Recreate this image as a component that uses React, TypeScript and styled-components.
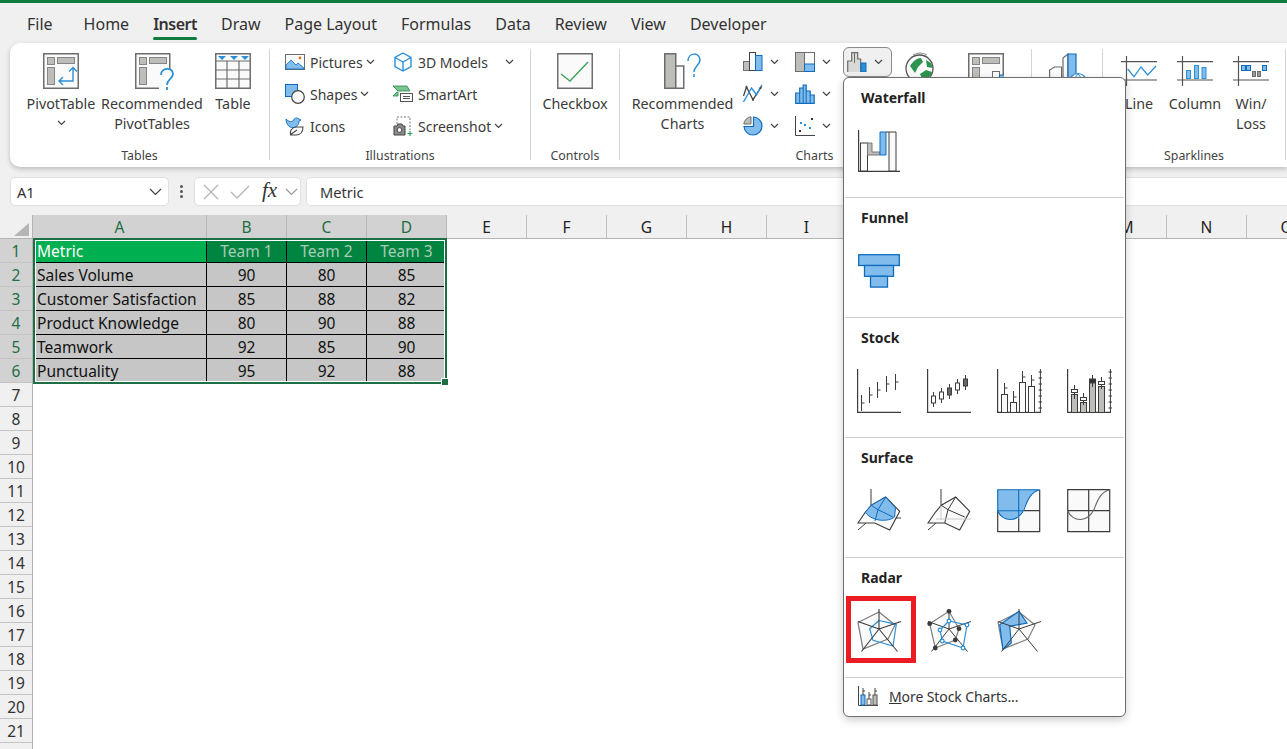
import React from 'react';
import styled, { createGlobalStyle } from 'styled-components';

const UI_FONT = '"Noto Sans", "Open Sans", sans-serif';
const CELL_FONT = '"Noto Sans", "Open Sans", sans-serif';
const GREEN = '#1e6e45';
const LINE = '#6d6d6d';
const DARK = '#3c3c3c';
const FILL = '#bdbdb9';
const PALE = '#fafafa';
const BLUE_FILL = '#82bcec';
const BLUE = '#0f6cbd';
const SKY = '#2b8fd8';

const GlobalStyle = createGlobalStyle`
  html, body {
    margin: 0;
    padding: 0;
    height: 100%;
    overflow: hidden;
    background: #fff;
  }
  body {
    font-family: ${UI_FONT};
  }
`;

const Page = styled.div`
  position: relative;
  width: 1287px;
  height: 749px;
  overflow: hidden;
  background: #fff;
  display: flex;
  flex-direction: column;
`;

const Chrome = styled.div`
  background: #f0f0f0;
  display: flex;
  flex-direction: column;
`;

const TopStripe = styled.div`
  height: 3px;
  background: #107c41;
`;

const TabBar = styled.div`
  height: 40px;
  display: flex;
  align-items: center;
  padding-left: 27px;
  gap: 24px;
  font-size: 16px;
  color: #333;
`;

const Tab = styled.div<{ $active?: boolean; $wide?: boolean }>`
  position: relative;
  height: 40px;
  line-height: 42px;
  margin-right: ${({ $wide }) => ($wide ? '7px' : '0')};
  font-weight: ${({ $active }) => ($active ? 600 : 400)};
  letter-spacing: ${({ $active }) => ($active ? '-0.5px' : '0')};
  ${({ $active }) =>
    $active &&
    `
    &::after {
      content: '';
      position: absolute;
      left: 0;
      right: 0;
      bottom: 3px;
      height: 3px;
      border-radius: 2px;
      background: #107c41;
    }
  `}
`;

const Ribbon = styled.div`
  margin-left: 10px;
  height: 124px;
  box-sizing: border-box;
  padding-top: 3px;
  background: #fff;
  border-radius: 10px 0 0 10px;
  box-shadow: 0 2px 5px rgba(0, 0, 0, 0.22);
  display: flex;
  align-items: flex-start;
  font-size: 14px;
  color: #3b3b3b;
  position: relative;
`;

const Group = styled.div<{ $width: number }>`
  width: ${({ $width }) => $width}px;
  flex: none;
  height: 120px;
  display: grid;
  grid-template-rows: 100px 20px;
`;

const GroupBody = styled.div<{ $pad?: number }>`
  display: flex;
  align-items: flex-start;
  padding-left: ${({ $pad }) => $pad ?? 0}px;
`;

const GroupLabel = styled.div<{ $shift?: number }>`
  text-align: center;
  font-size: 12.4px;
  line-height: 20px;
  color: #444;
  padding-right: ${({ $shift }) => $shift ?? 0}px;
`;

const GroupSep = styled.div`
  width: 1px;
  flex: none;
  height: 111px;
  margin-top: 3px;
  background: #d4d4d4;
`;

const LargeButton = styled.div<{ $width: number; $gap?: number }>`
  width: ${({ $width }) => $width}px;
  flex: none;
  margin-left: ${({ $gap }) => $gap ?? 0}px;
  padding-top: 7px;
  display: flex;
  flex-direction: column;
  align-items: center;
  text-align: center;
`;

const LargeIcon = styled.div<{ $nudge?: number }>`
  height: 36px;
  margin-bottom: 5px;
  margin-left: ${({ $nudge }) => $nudge ?? 0}px;
  display: flex;
  align-items: flex-start;
  svg {
    overflow: visible;
  }
`;

const LargeLabel = styled.div`
  font-size: 14.3px;
  line-height: 20px;
  white-space: nowrap;
`;

const LargeChevron = styled.div`
  line-height: 0;
  margin-top: 6px;
`;

const SmallColumn = styled.div<{ $width: number; $gap?: number }>`
  width: ${({ $width }) => $width}px;
  margin-left: ${({ $gap }) => $gap ?? 0}px;
  flex: none;
  display: flex;
  flex-direction: column;
`;

const SmallButton = styled.div`
  height: 32px;
  display: flex;
  align-items: center;
  gap: 5px;
  white-space: nowrap;
`;

const DropChevron = styled.span<{ $gap?: number }>`
  display: inline-flex;
  margin-left: ${({ $gap }) => $gap ?? 0}px;
`;

const ActiveDrop = styled.div`
  width: 49px;
  height: 30px;
  flex: none;
  margin-top: 1px;
  box-sizing: border-box;
  border: 1px solid #8a8a8a;
  border-radius: 6px;
  background: #f0f0f0;
  display: flex;
  align-items: center;
  padding-left: 3px;
  gap: 6px;
`;

const PlainIconSlot = styled.div<{ $gap: number; $top?: number }>`
  flex: none;
  margin-left: ${({ $gap }) => $gap}px;
  padding-top: ${({ $top }) => $top ?? 6}px;
`;

const FormulaBar = styled.div`
  height: 29px;
  margin-top: 10px;
  margin-bottom: 9px;
  display: flex;
  align-items: stretch;
  padding-left: 10px;
  font-size: 14.6px;
  color: #333;
`;

const Field = styled.div`
  box-sizing: border-box;
  background: #fff;
  border: 1px solid #e0e0e0;
  border-radius: 5px;
  display: flex;
  align-items: center;
`;

const NameBox = styled(Field)`
  width: 159px;
  padding: 0 6px;
  justify-content: space-between;
`;

const Kebab = styled.div`
  width: 25px;
  display: flex;
  flex-direction: column;
  align-items: center;
  justify-content: center;
  gap: 2px;
  span {
    width: 3px;
    height: 3px;
    background: #555;
    border-radius: 50%;
  }
`;

const FnBox = styled(Field)`
  width: 107px;
  padding-left: 8px;
  gap: 11px;
`;

const FxMark = styled.span`
  font-family: 'Liberation Serif', serif;
  font-style: italic;
  font-size: 21px;
  line-height: 1;
  color: #333;
  margin: -2px 0 0 1px;
`;

const FxChevron = styled.span`
  display: inline-flex;
  margin-left: -3px;
`;

const FormulaInput = styled(Field)`
  flex: 1;
  margin-left: 5px;
  padding-left: 13px;
  border-right: none;
  border-radius: 5px 0 0 5px;
`;

const HeaderRow = styled.div`
  display: flex;
  height: 24px;
  background: #f0f0f0;
`;

const Corner = styled.div`
  width: 33px;
  flex: none;
  box-sizing: border-box;
  display: flex;
  align-items: flex-end;
  justify-content: flex-end;
  padding: 0 3px 2px 0;
  border-bottom: 1px solid #b4b4b4;
  border-right: 1px solid #b4b4b4;
  &::before {
    content: '';
    width: 0;
    height: 0;
    border-style: solid;
    border-width: 0 0 13px 15px;
    border-color: transparent transparent #b5b5b5 transparent;
  }
`;

const ColHead = styled.div<{ $width: number; $selected?: boolean }>`
  width: ${({ $width }) => $width}px;
  flex: none;
  box-sizing: border-box;
  text-align: center;
  font-size: 15.5px;
  line-height: 25px;
  background: ${({ $selected }) => ($selected ? '#d2d2d2' : 'transparent')};
  color: ${({ $selected }) => ($selected ? GREEN : '#222')};
  border-right: 1px solid ${({ $selected }) => ($selected ? '#b8b8b8' : '#c0c0c0')};
  border-bottom: 1px solid ${({ $selected }) => ($selected ? GREEN : '#b4b4b4')};
`;

const SheetBody = styled.div`
  display: flex;
  flex: 1;
  min-height: 0;
`;

const RowHeads = styled.div`
  width: 33px;
  flex: none;
  display: flex;
  flex-direction: column;
  background: #f0f0f0;
  border-right: 1px solid #b4b4b4;
  box-sizing: border-box;
`;

const RowHead = styled.div<{ $selected?: boolean }>`
  height: 24px;
  flex: none;
  box-sizing: border-box;
  text-align: center;
  font-size: 15.5px;
  line-height: 25px;
  background: ${({ $selected }) => ($selected ? '#d2d2d2' : 'transparent')};
  color: ${({ $selected }) => ($selected ? GREEN : '#333')};
  border-bottom: 1px solid #c4c4c4;
`;

const Sheet = styled.div`
  position: relative;
  flex: 1;
  background: #fff;
`;

const DataGrid = styled.div`
  display: grid;
  grid-template-columns: 174px repeat(3, 80px);
  grid-auto-rows: 24px;
  width: 414px;
  font-family: ${CELL_FONT};
  font-size: 15.5px;
`;

const Cell = styled.div<{ $kind: 'active' | 'head' | 'text' | 'num' }>`
  box-sizing: border-box;
  line-height: 25px;
  padding: ${({ $kind }) => ($kind === 'active' || $kind === 'text' ? '0 0 0 4px' : '0')};
  text-align: ${({ $kind }) => ($kind === 'head' || $kind === 'num' ? 'center' : 'left')};
  white-space: nowrap;
  overflow: hidden;
  border-right: 1px solid #000;
  border-bottom: 1px solid #000;
  background: ${({ $kind }) =>
    $kind === 'active' ? '#00b050' : $kind === 'head' ? '#00843f' : '#c6c6c6'};
  color: ${({ $kind }) =>
    $kind === 'active' ? '#fff' : $kind === 'head' ? '#a9cdb8' : '#111'};
`;

const Selection = styled.div`
  position: absolute;
  left: 0;
  top: -1px;
  width: 414px;
  height: 146px;
  box-sizing: border-box;
  border: 2px solid ${GREEN};
  box-shadow: inset 0 0 0 1px #fff;
  pointer-events: none;
`;

const FillHandle = styled.div`
  position: absolute;
  right: -4px;
  bottom: -4px;
  width: 6px;
  height: 6px;
  background: ${GREEN};
  border: 1px solid #fff;
`;

const Menu = styled.div`
  position: absolute;
  left: 843px;
  top: 77px;
  width: 283px;
  height: 640px;
  box-sizing: border-box;
  background: #fff;
  border: 1px solid #6e6e6e;
  border-radius: 6px;
  box-shadow: 0 3px 8px rgba(0, 0, 0, 0.2);
  z-index: 10;
  color: #222;
`;

const MenuSection = styled.div`
  height: 120px;
  box-sizing: border-box;
  border-bottom: 1px solid #d0d0d0;
  margin: 0 1px;
`;

const MenuTitle = styled.div`
  height: 40px;
  padding-left: 16px;
  font-size: 14px;
  font-weight: 700;
  line-height: 39px;
  color: #222;
`;

const Gallery = styled.div`
  display: flex;
  margin-left: -1px;
`;

const GalleryItem = styled.div`
  position: relative;
  width: 70px;
  height: 66px;
  display: flex;
  align-items: center;
  justify-content: center;
`;

const RedMark = styled.div`
  position: absolute;
  left: 2px;
  top: -2px;
  width: 70px;
  height: 67px;
  box-sizing: border-box;
  border: 5px solid #ed1c24;
`;

const MoreRow = styled.div`
  height: 36px;
  display: flex;
  align-items: center;
  padding-left: 14px;
  gap: 11px;
  font-size: 14px;
  color: #333;
  letter-spacing: -0.1px;
`;

const Mnemonic = styled.span`
  text-decoration: underline;
`;

const Chevron = ({ color = '#444', big }: { color?: string; big?: boolean }) =>
  big ? (
    <svg width="13" height="8" viewBox="0 0 13 8">
      <path d="M1 1l5.500 5.500L12 1" fill="none" stroke={color} strokeWidth="1.200" />
    </svg>
  ) : (
    <svg width="9" height="6" viewBox="0 0 9 6">
      <path d="M1 1l3.500 3.500L8 1" fill="none" stroke={color} strokeWidth="1.200" />
    </svg>
  );

const PivotPanes = () => (
  <g fill={FILL} stroke="#858585" strokeWidth="1">
    <rect x="4.500" y="4.500" width="7" height="7" />
    <rect x="14.500" y="4.500" width="17" height="6" />
    <rect x="4.500" y="14.500" width="7" height="17" />
  </g>
);

const PivotTableIcon = () => (
  <svg width="36" height="36" viewBox="0 0 36 36">
    <rect x=".750" y=".750" width="34.500" height="34.500" fill={PALE} stroke={LINE} strokeWidth="1.500" />
    <PivotPanes />
    <path d="M30 15v13H16M26 18.500l4-4 4 4M20 24l-4 4 4 4" fill="none" stroke={SKY} strokeWidth="1.400" />
  </svg>
);

const RecommendedPivotIcon = () => (
  <svg width="40" height="38" viewBox="0 0 40 38">
    <path d="M24 35.250H.750V.750h34V16" fill={PALE} stroke={LINE} strokeWidth="1.500" />
    <PivotPanes />
    <path d="M26 22c0-8 12-8 12-1 0 5-6 5-6 11M32 34v3" fill="none" stroke={SKY} strokeWidth="1.800" />
  </svg>
);

const TableIcon = () => (
  <svg width="36" height="36" viewBox="0 0 36 36">
    <rect x=".750" y=".750" width="34.500" height="34.500" fill={PALE} stroke={LINE} strokeWidth="1.500" />
    <path d="M.750 8h34.500M.750 17h34.500M.750 26h34.500M12 8v27M24 8v27" stroke={LINE} strokeWidth="1.200" fill="none" />
    <path d="M3 3h8l-4 4zM15 3h8l-4 4zM26 3h8l-4 4z" fill={SKY} />
  </svg>
);

const PicturesIcon = () => (
  <svg width="20" height="17" viewBox="0 0 20 17">
    <rect x=".500" y=".500" width="19" height="15" fill={PALE} stroke={LINE} />
    <path d="M1 15V11l5-5 5 5 2-2 6 5v1z" fill={BLUE_FILL} stroke={BLUE} strokeWidth=".800" />
    <circle cx="15" cy="4" r="1.400" fill="#e8742a" />
  </svg>
);

const ShapesIcon = () => (
  <svg width="20" height="20" viewBox="0 0 20 20">
    <rect x=".500" y=".500" width="12" height="12" fill={BLUE_FILL} stroke={BLUE} />
    <circle cx="13" cy="13" r="6.300" fill={PALE} stroke="#444" strokeWidth="1.200" />
  </svg>
);

const IconsIcon = () => (
  <svg width="20" height="20" viewBox="0 0 20 20">
    <path d="M1 3c3 3 5 3 7 2 1-3 4-4 6-2l2 1-2 1c0 5-5 8-9 6C2 9 1 6 1 3z" fill={BLUE_FILL} stroke={BLUE} strokeWidth=".900" />
    <path d="M6 19c-2-4 1-8 6-8h6c0 5-3 8-7 8zM5 19l7-5" fill={PALE} stroke="#444" strokeWidth="1.100" />
  </svg>
);

const CubeIcon = () => (
  <svg width="20" height="20" viewBox="0 0 20 20">
    <path d="M10 1l8 4.500v9L10 19l-8-4.500v-9zM2 5.500L10 10l8-4.500M10 10v9" fill="none" stroke={SKY} strokeWidth="1.400" />
  </svg>
);

const SmartArtIcon = () => (
  <svg width="20" height="18" viewBox="0 0 20 18">
    <path d="M0 1h14l3 5H5zM0 11l4-4h1v4z" fill="#7cc48f" stroke="#1f8a4c" strokeWidth=".800" />
    <rect x="7.500" y="8.500" width="12" height="8" fill={PALE} stroke="#555" />
    <path d="M10 11.500h7M10 13.500h7" stroke="#555" />
  </svg>
);

const ScreenshotIcon = () => (
  <svg width="20" height="20" viewBox="0 0 20 20">
    <path d="M4 8V1h13v13" fill="none" stroke="#777" strokeDasharray="2 1.500" />
    <path d="M1 10h3l1-2h4l1 2h2v9H1z" fill="#8a8a8a" stroke="#444" />
    <circle cx="6.500" cy="14" r="2.400" fill={PALE} stroke="#444" />
    <path d="M17 15v5M14.500 17.500h5" stroke="#2fa35c" strokeWidth="1.200" />
  </svg>
);

const CheckboxIcon = () => (
  <svg width="36" height="36" viewBox="0 0 36 36">
    <rect x=".750" y=".750" width="34.500" height="34.500" fill={PALE} stroke={LINE} strokeWidth="1.500" />
    <path d="M4 21l9 7L31 9" fill="none" stroke="#3fa35b" strokeWidth="1.400" />
  </svg>
);

const RecommendedChartsIcon = () => (
  <svg width="38" height="36" viewBox="0 0 38 36">
    <rect x=".750" y=".750" width="11" height="34.500" fill={FILL} stroke={LINE} strokeWidth="1.500" />
    <rect x="11.750" y="13" width="8" height="22.250" fill={PALE} stroke={LINE} strokeWidth="1.500" />
    <path d="M24 8c0-9 12-9 12-1 0 5-6 6-6 12M30 21v3" fill="none" stroke={SKY} strokeWidth="1.500" />
  </svg>
);

const ColumnSmallIcon = () => (
  <svg width="20" height="20" viewBox="0 0 20 20">
    <rect x=".500" y="9.500" width="6" height="9" fill={FILL} stroke={LINE} />
    <rect x="6.500" y=".500" width="6" height="18" fill={PALE} stroke="#444" />
    <rect x="12.500" y="3.500" width="6.500" height="15" fill={BLUE_FILL} stroke={BLUE} />
  </svg>
);

const LineSmallIcon = () => (
  <svg width="20" height="20" viewBox="0 0 20 20">
    <path d="M.500 12L3.500 3l6.500 12.700L18.500 2.300" fill="none" stroke="#444" strokeWidth="1.300" />
    <path d="M.500 18L8.500 4l5 6.700L19 .700" fill="none" stroke={SKY} strokeWidth="1.300" />
    <g fill="#444">
      <circle cx="3.500" cy="3" r="1.100" />
      <circle cx="10" cy="15.700" r="1.100" />
      <circle cx="17.500" cy="4" r="1.100" />
    </g>
  </svg>
);

const PieSmallIcon = () => (
  <svg width="20" height="20" viewBox="0 0 20 20">
    <path d="M10.500 1a9 9 0 1 1-9.500 9.500h9.500z" fill={BLUE_FILL} stroke={BLUE} strokeWidth="1.200" />
    <path d="M8 .800V8H.800A8 8 0 0 1 8 .800z" fill={FILL} stroke={LINE} />
  </svg>
);

const TreemapIcon = () => (
  <svg width="20" height="20" viewBox="0 0 20 20">
    <rect x=".500" y=".500" width="19" height="19" fill={PALE} stroke={LINE} />
    <rect x=".500" y=".500" width="9" height="19" fill={FILL} stroke={LINE} />
    <rect x="9.500" y="12" width="10" height="7.500" fill={BLUE_FILL} stroke={BLUE} />
  </svg>
);

const HistogramIcon = () => (
  <svg width="20" height="20" viewBox="0 0 20 20">
    <path d="M.700 19.300V9h4V4h3.500V1h3v6h4v4h4v8.300z" fill={BLUE_FILL} stroke={BLUE} strokeWidth="1.200" />
    <path d="M4.700 9v10M8.200 4v15M11.200 7v12M15.200 11v8" stroke={BLUE} />
  </svg>
);

const ScatterIcon = () => (
  <svg width="20" height="20" viewBox="0 0 20 20">
    <path d="M.500 0v19.500H20" fill="none" stroke="#444" />
    <g fill="#333">
      <rect x="16" y="2" width="2" height="2" />
      <rect x="4" y="14" width="2" height="2" />
    </g>
    <g fill={SKY}>
      <rect x="5" y="6" width="2" height="2" />
      <rect x="9" y="8" width="2" height="2" />
      <rect x="14" y="11" width="2" height="2" />
    </g>
  </svg>
);

const WaterfallSmallIcon = () => (
  <svg width="21" height="20" viewBox="0 0 21 20">
    <path d="M.700 20V9h4V.700h6V7h3v13" fill="#d8d8d6" stroke={LINE} strokeWidth="1.200" />
    <rect x="14" y="11" width="5" height="9" fill={SKY} stroke={BLUE} />
    <path d="M7.500 1v10" stroke={LINE} />
  </svg>
);

const GlobeIcon = () => (
  <svg width="30" height="31" viewBox="0 0 30 31">
    <circle cx="14.500" cy="16.500" r="13.500" fill={PALE} stroke="#555" strokeWidth="1.300" />
    <path d="M5 14c3-5 7-8 11-8l2 4-5 5-3 6zM15 22l6-4 6 2c-1 4-5 8-9 9zM21 8l5 3 2 5-6-1z" fill="#2e9350" />
    <path d="M8 3a14 14 0 0 1 14 0" fill="none" stroke="#888" />
  </svg>
);

const PivotChartIcon = () => (
  <svg width="36" height="36" viewBox="0 0 36 36">
    <path d="M.750 35.250V.750h34.500v26" fill={PALE} stroke={LINE} strokeWidth="1.500" />
    <PivotPanes />
    <rect x="24.500" y="18.500" width="7" height="17" fill={PALE} stroke={LINE} />
    <rect x="31.500" y="22" width="5" height="14" fill={BLUE_FILL} stroke={BLUE} />
  </svg>
);

const MapIcon = () => (
  <svg width="40" height="38" viewBox="0 0 40 38">
    <path d="M.600 36V17l5-3h7v22" fill={PALE} stroke={LINE} strokeWidth="1.200" />
    <path d="M14 36V5l5-4v35" fill={PALE} stroke={LINE} strokeWidth="1.200" />
    <path d="M19 36V1h8v35z" fill={BLUE_FILL} stroke={BLUE} strokeWidth="1.200" />
    <circle cx="29" cy="29" r="8.500" fill={PALE} stroke={SKY} strokeWidth="1.200" />
    <path d="M21 29h16M29 21c-5 5-5 11 0 16M29 21c5 5 5 11 0 16" fill="none" stroke={SKY} />
  </svg>
);

const SparkFrame = ({ children }: { children: React.ReactNode }) => (
  <svg width="36" height="36" viewBox="0 -3 36 36">
    <path d="M5.500 0v30M0 5.700h36M0 24h36" stroke="#555" strokeWidth="1.200" fill="none" />
    {children}
  </svg>
);

const SparkLineIcon = () => (
  <SparkFrame>
    <path d="M6.700 13l6.300 7.700L20 11l6.700 8L35 10" fill="none" stroke={SKY} strokeWidth="1.200" />
  </SparkFrame>
);

const SparkColumnIcon = () => (
  <SparkFrame>
    <g fill={BLUE_FILL} stroke={SKY}>
      <rect x="9.500" y="14.500" width="4" height="8" />
      <rect x="17.500" y="9.500" width="4" height="13" />
      <rect x="25" y="11.500" width="4" height="11" />
    </g>
  </SparkFrame>
);

const SparkWinLossIcon = () => (
  <SparkFrame>
    <g fill={BLUE_FILL} stroke={BLUE}>
      <rect x="8.500" y="9.500" width="4" height="5" />
      <rect x="13.500" y="9.500" width="4" height="5" />
      <rect x="29.500" y="9.500" width="4" height="5" />
    </g>
    <g fill="#9a9a96" stroke={LINE}>
      <rect x="19.500" y="15.500" width="3" height="5" />
      <rect x="24.500" y="15.500" width="3" height="5" />
    </g>
  </SparkFrame>
);

const WaterfallIcon = () => (
  <svg width="42" height="42" viewBox="0 0 42 42">
    <path d="M.600 0v41.400H42" fill="none" stroke={DARK} strokeWidth="1.200" />
    <rect x="2.500" y="13" width="7" height="28" fill={PALE} stroke={DARK} />
    <path d="M9.500 13h4.500v9h8v3H9.500z" fill={FILL} stroke="#777" />
    <path d="M22 2h6v23h-6z" fill={BLUE_FILL} stroke={BLUE} />
    <path d="M31 2h7v39h-7zM28 2h3" fill={PALE} stroke={DARK} />
  </svg>
);

const FunnelIcon = () => (
  <svg width="42" height="34" viewBox="0 0 42 34">
    <g fill={BLUE_FILL} stroke={BLUE} strokeWidth="1.300">
      <rect x=".700" y=".700" width="40.600" height="10.800" />
      <rect x="6.500" y="11.500" width="29" height="10.800" />
      <rect x="12.500" y="22.300" width="17" height="10.800" />
    </g>
  </svg>
);

const Stock = ({ children, right }: { children?: React.ReactNode; right?: boolean }) => (
  <svg width="45" height="44" viewBox="0 0 45 44">
    <path d="M.600 0v43.400H44" fill="none" stroke={DARK} strokeWidth="1.200" />
    {right && <path d="M43.400 0v43.400M41.500 3h4M41.500 9h4M41.500 15h4M41.500 21h4M41.500 27h4M41.500 33h4M41.500 39h4" fill="none" stroke={DARK} />}
    {children}
  </svg>
);

const StockHlcIcon = () => (
  <Stock>
    <path d="M4.500 26v16M4.500 34h3M12.500 18v16M12.500 26h3M20.500 13v16M20.500 21h3M29.500 7v16M29.500 15h3M38.500 5v16M38.500 13h3" fill="none" stroke={DARK} />
  </Stock>
);

const StockOhlcIcon = () => (
  <Stock>
    <path d="M6.500 23v15M14.500 19v15M22.500 15v15M30.500 10v15M38.500 6v15" stroke={DARK} />
    <rect x="4.500" y="27" width="4" height="7" fill="#fff" stroke={DARK} />
    <rect x="12.500" y="23" width="4" height="7" fill="#fff" stroke={DARK} />
    <rect x="20.500" y="19" width="4" height="7" fill="#666" stroke={DARK} />
    <rect x="28.500" y="14" width="4" height="7" fill="#fff" stroke={DARK} />
    <rect x="36.500" y="10" width="4" height="7" fill="#666" stroke={DARK} />
  </Stock>
);

const StockVolumeHlcIcon = () => (
  <Stock right>
    <g fill={PALE} stroke={DARK}>
      <rect x="4.500" y="25.500" width="6" height="18" />
      <rect x="13.500" y="33.500" width="6" height="10" />
      <rect x="22.500" y="13.500" width="6" height="30" />
      <rect x="31.500" y="17.500" width="6" height="26" />
    </g>
    <path d="M7.500 14v11M7.500 19h3M16.500 22v11M16.500 28h3M25.500 2v11M25.500 8h3M34.500 6v11M34.500 11h3" fill="none" stroke={DARK} />
  </Stock>
);

const StockVolumeOhlcIcon = () => (
  <Stock right>
    <g fill={FILL} stroke={DARK}>
      <rect x="4.500" y="25.500" width="6" height="18" />
      <rect x="13.500" y="33.500" width="6" height="10" />
      <rect x="22.500" y="13.500" width="6" height="30" />
      <rect x="31.500" y="17.500" width="6" height="26" />
    </g>
    <path d="M7.500 16v14M16.500 24v12M25.500 6v12M34.500 8v12" stroke={DARK} />
    <rect x="4.500" y="20.500" width="6" height="3" fill="#fff" stroke={DARK} />
    <rect x="13.500" y="28.500" width="6" height="3" fill="#fff" stroke={DARK} />
    <rect x="22.500" y="10" width="6" height="4" fill="#333" stroke={DARK} />
    <rect x="31.500" y="12.500" width="6" height="3" fill="#fff" stroke={DARK} />
  </Stock>
);

const SURFACE_SHEET = 'M8.300 23.300L1 34h16.700l15 7 10-18.700L28.700 8 14.300 16.300z';
const SURFACE_RIBS = 'M14.300 16.300L21 20.700 17.700 34M21 20.700L28.700 8M21 20.700L37.700 28';

const SurfaceFilledIcon = () => (
  <svg width="44" height="44" viewBox="0 0 44 44">
    <path d="M14 0v16M1 41l8-7M36 29h8" fill="none" stroke={DARK} />
    <path d={SURFACE_SHEET} fill={PALE} stroke={DARK} strokeWidth="1.100" />
    <path d="M8.300 23.300l6-7L28.700 8l9.800 11-1 9c-6 5-22 5-29.200-4.700z" fill={BLUE_FILL} stroke={BLUE} />
    <path d="M14.300 16.300L21 20.700 18 32M21 20.700L28.700 8M21 20.700L36 28" fill="none" stroke={BLUE} />
  </svg>
);

const SurfaceWireIcon = () => (
  <svg width="44" height="44" viewBox="0 0 44 44">
    <path d="M14 0v16M1 41l8-7" fill="none" stroke={DARK} />
    <path d={SURFACE_SHEET} fill={PALE} stroke={DARK} strokeWidth="1.100" />
    <path d={SURFACE_RIBS} fill="none" stroke={DARK} />
    <path d="M14 17v14M9 30h35" fill="none" stroke="#ccc" />
  </svg>
);

const ContourGrid = () => (
  <path d="M.700.700h42v42H.700zM21.700.700v42M.700 21.700h42" fill="none" stroke={DARK} strokeWidth="1.200" />
);

const ContourFilledIcon = () => (
  <svg width="44" height="44" viewBox="0 0 44 44">
    <rect x=".700" y=".700" width="42" height="42" fill={PALE} />
    <path d="M.700.700h42C33 3 30 13 26 21c-4 8-11 10-16 9-5-1-8-5-9.300-8.300z" fill={BLUE_FILL} />
    <path d="M.700 21.700v21h42v-42M21.700 30v12.700M27 21.700h15.700" fill="none" stroke={DARK} strokeWidth="1.200" />
    <path d="M.700 21.700V.700h42C33 3 30 13 27 20.500c-3 6-7 9.500-13 10C9 31 3 28 .700 21.700h26M21.700.700v30" fill="none" stroke={BLUE} strokeWidth="1.100" />
  </svg>
);

const ContourWireIcon = () => (
  <svg width="44" height="44" viewBox="0 0 44 44">
    <rect x=".700" y=".700" width="42" height="42" fill={PALE} />
    <ContourGrid />
    <path d="M.700 21.700C3 28 9 31 14 30.500c6-.5 10-4 13-10C30 13 33 3 42.700.700" fill="none" stroke="#666" strokeWidth="1.100" />
  </svg>
);

const RADAR_SPOKES = 'M22 21V1M22 21L44 13.500M22 21L40.500 43.500M22 21L4.500 43.500M22 21L1 13.500';
const RADAR_FRAME = '22,4 38,17 31,31 6,41 1,14.500';

const RadarIcon = () => (
  <svg width="45" height="46" viewBox="0 0 45 46">
    <polygon points={RADAR_FRAME} fill={PALE} stroke="#808080" strokeWidth="1.300" />
    <polygon points="22,12.500 39.300,16.300 36,38 16,32.300 12.700,20.700" fill="none" stroke={SKY} strokeWidth="1.200" />
    <path d={RADAR_SPOKES} stroke={DARK} strokeWidth="1.100" fill="none" />
  </svg>
);

const RadarMarkersIcon = () => (
  <svg width="45" height="46" viewBox="0 0 45 46">
    <polygon points="22,3.300 32,20.700 28.300,32 8.300,40 2.700,15.700" fill={PALE} stroke="#808080" strokeWidth="1.200" />
    <path d={RADAR_SPOKES} stroke={DARK} fill="none" />
    <polygon points="22,13 40,17 36,40 15.300,33 13,22" fill="none" stroke={SKY} strokeWidth="1.200" />
    <g fill={DARK}>
      <circle cx="22" cy="3.300" r="2.400" />
      <circle cx="32" cy="20.700" r="2.400" />
      <circle cx="28.300" cy="32" r="2.400" />
      <circle cx="8.300" cy="40" r="2.400" />
      <circle cx="2.700" cy="15.700" r="2.400" />
    </g>
    <g fill="#fff" stroke={SKY} strokeWidth="1.200">
      <circle cx="22" cy="13" r="1.800" />
      <circle cx="40" cy="17" r="1.800" />
      <circle cx="36" cy="40" r="1.800" />
      <circle cx="15.300" cy="33" r="1.800" />
      <circle cx="13" cy="22" r="1.800" />
    </g>
  </svg>
);

const RadarFilledIcon = () => (
  <svg width="45" height="46" viewBox="0 0 45 46">
    <polygon points="22,4 38,17 31,31 6,41 1,14.500" fill={PALE} stroke="#808080" strokeWidth="1.200" />
    <polygon points="2.700,16.700 22,3.300 30,15 12.700,18.300 14.300,35 6,41.700" fill={BLUE_FILL} stroke={BLUE} strokeWidth="1.200" />
    <path d={RADAR_SPOKES} stroke={DARK} fill="none" />
  </svg>
);

const MoreStockIcon = () => (
  <svg width="20" height="20" viewBox="0 0 20 20">
    <path d="M.500 0v19.500H20" fill="none" stroke="#444" />
    <rect x="3" y="9" width="4" height="10" fill={BLUE_FILL} stroke={BLUE} />
    <rect x="9" y="13" width="4" height="6" fill={PALE} stroke="#555" />
    <rect x="15" y="9" width="4" height="10" fill={FILL} stroke="#555" />
    <path d="M5 2v7M11 6v7M17 2v7M5 5h2M11 9h2M17 5h2" stroke="#444" fill="none" />
  </svg>
);

const TABS = ['Home', 'Insert', 'Draw', 'Page Layout', 'Formulas', 'Data', 'Review', 'View', 'Developer'];

const COLUMNS = ['A', 'B', 'C', 'D', 'E', 'F', 'G', 'H', 'I', 'J', 'K', 'L', 'M', 'N', 'O'];

const ROWS = [
  ['Sales Volume', 90, 80, 85],
  ['Customer Satisfaction', 85, 88, 82],
  ['Product Knowledge', 80, 90, 88],
  ['Teamwork', 92, 85, 90],
  ['Punctuality', 95, 92, 88],
];

const MENU = [
  { title: 'Waterfall', icons: [WaterfallIcon] },
  { title: 'Funnel', icons: [FunnelIcon] },
  { title: 'Stock', icons: [StockHlcIcon, StockOhlcIcon, StockVolumeHlcIcon, StockVolumeOhlcIcon] },
  { title: 'Surface', icons: [SurfaceFilledIcon, SurfaceWireIcon, ContourFilledIcon, ContourWireIcon] },
  { title: 'Radar', icons: [RadarIcon, RadarMarkersIcon, RadarFilledIcon], marked: 0 },
];

const IconDrop = ({ icon, gap }: { icon: React.ReactNode; gap: number }) => (
  <SmallButton>
    {icon}
    <DropChevron $gap={gap}>
      <Chevron />
    </DropChevron>
  </SmallButton>
);

const App = () => {
  return (
    <Page>
      <GlobalStyle />
      <Chrome>
        <TopStripe />
        <TabBar>
          <Tab $wide>File</Tab>
          {TABS.map((tab) => (
            <Tab key={tab} $active={tab === 'Insert'}>
              {tab}
            </Tab>
          ))}
        </TabBar>

        <Ribbon>
          <Group $width={259}>
            <GroupBody $pad={12}>
              <LargeButton $width={78}>
                <LargeIcon>
                  <PivotTableIcon />
                </LargeIcon>
                <LargeLabel>PivotTable</LargeLabel>
                <LargeChevron>
                  <Chevron />
                </LargeChevron>
              </LargeButton>
              <LargeButton $width={104}>
                <LargeIcon $nudge={6}>
                  <RecommendedPivotIcon />
                </LargeIcon>
                <LargeLabel>Recommended</LargeLabel>
                <LargeLabel>PivotTables</LargeLabel>
              </LargeButton>
              <LargeButton $width={58}>
                <LargeIcon>
                  <TableIcon />
                </LargeIcon>
                <LargeLabel>Table</LargeLabel>
              </LargeButton>
            </GroupBody>
            <GroupLabel>Tables</GroupLabel>
          </Group>
          <GroupSep />

          <Group $width={260}>
            <GroupBody $pad={15}>
              <SmallColumn $width={108}>
                <SmallButton>
                  <PicturesIcon />
                  Pictures
                  <DropChevron $gap={-2}>
                    <Chevron />
                  </DropChevron>
                </SmallButton>
                <SmallButton>
                  <ShapesIcon />
                  Shapes
                  <DropChevron $gap={-2}>
                    <Chevron />
                  </DropChevron>
                </SmallButton>
                <SmallButton>
                  <IconsIcon />
                  Icons
                </SmallButton>
              </SmallColumn>
              <SmallColumn $width={125}>
                <SmallButton>
                  <CubeIcon />
                  3D Models
                  <DropChevron $gap={12}>
                    <Chevron />
                  </DropChevron>
                </SmallButton>
                <SmallButton>
                  <SmartArtIcon />
                  SmartArt
                </SmallButton>
                <SmallButton>
                  <ScreenshotIcon />
                  Screenshot
                  <DropChevron $gap={-2}>
                    <Chevron />
                  </DropChevron>
                </SmallButton>
              </SmallColumn>
            </GroupBody>
            <GroupLabel>Illustrations</GroupLabel>
          </Group>
          <GroupSep />

          <Group $width={88}>
            <GroupBody>
              <LargeButton $width={88}>
                <LargeIcon>
                  <CheckboxIcon />
                </LargeIcon>
                <LargeLabel>Checkbox</LargeLabel>
              </LargeButton>
            </GroupBody>
            <GroupLabel>Controls</GroupLabel>
          </Group>
          <GroupSep />

          <Group $width={411}>
            <GroupBody $pad={12}>
              <LargeButton $width={101}>
                <LargeIcon>
                  <RecommendedChartsIcon />
                </LargeIcon>
                <LargeLabel>Recommended</LargeLabel>
                <LargeLabel>Charts</LargeLabel>
              </LargeButton>
              <SmallColumn $width={52} $gap={10}>
                <IconDrop icon={<ColumnSmallIcon />} gap={2} />
                <IconDrop icon={<LineSmallIcon />} gap={2} />
                <IconDrop icon={<PieSmallIcon />} gap={2} />
              </SmallColumn>
              <SmallColumn $width={48}>
                <IconDrop icon={<TreemapIcon />} gap={2} />
                <IconDrop icon={<HistogramIcon />} gap={2} />
                <IconDrop icon={<ScatterIcon />} gap={2} />
              </SmallColumn>
              <ActiveDrop>
                <WaterfallSmallIcon />
                <Chevron />
              </ActiveDrop>
              <PlainIconSlot $gap={13} $top={6}>
                <GlobeIcon />
              </PlainIconSlot>
              <PlainIconSlot $gap={33} $top={7}>
                <PivotChartIcon />
              </PlainIconSlot>
            </GroupBody>
            <GroupLabel $shift={22}>Charts</GroupLabel>
          </Group>
          <GroupSep />

          <Group $width={70}>
            <GroupBody>
              <PlainIconSlot $gap={17} $top={7}>
                <MapIcon />
              </PlainIconSlot>
            </GroupBody>
          </Group>
          <GroupSep />

          <Group $width={182}>
            <GroupBody $pad={0}>
              <LargeButton $width={56} $gap={8}>
                <LargeIcon>
                  <SparkLineIcon />
                </LargeIcon>
                <LargeLabel>Line</LargeLabel>
              </LargeButton>
              <LargeButton $width={56}>
                <LargeIcon>
                  <SparkColumnIcon />
                </LargeIcon>
                <LargeLabel>Column</LargeLabel>
              </LargeButton>
              <LargeButton $width={56}>
                <LargeIcon>
                  <SparkWinLossIcon />
                </LargeIcon>
                <LargeLabel>Win/</LargeLabel>
                <LargeLabel>Loss</LargeLabel>
              </LargeButton>
            </GroupBody>
            <GroupLabel>Sparklines</GroupLabel>
          </Group>
          <GroupSep />
        </Ribbon>

        <FormulaBar>
          <NameBox>
            A1
            <Chevron big />
          </NameBox>
          <Kebab>
            <span />
            <span />
            <span />
          </Kebab>
          <FnBox>
            <svg width="16" height="16" viewBox="0 0 16 16">
              <path d="M1 1l14 14M15 1L1 15" stroke="#b4b4b4" strokeWidth="1.300" />
            </svg>
            <svg width="20" height="16" viewBox="0 0 20 16">
              <path d="M1 8l6 6L19 2" fill="none" stroke="#b4b4b4" strokeWidth="1.300" />
            </svg>
            <FxMark>fx</FxMark>
            <FxChevron>
              <Chevron big color="#999" />
            </FxChevron>
          </FnBox>
          <FormulaInput>Metric</FormulaInput>
        </FormulaBar>

        <HeaderRow>
          <Corner />
          {COLUMNS.map((col, i) => (
            <ColHead key={col} $width={i === 0 ? 174 : 80} $selected={i < 4}>
              {col}
            </ColHead>
          ))}
        </HeaderRow>
      </Chrome>

      <SheetBody>
        <RowHeads>
          {Array.from({ length: 22 }, (_, i) => (
            <RowHead key={i} $selected={i < 6}>
              {i < 21 ? i + 1 : ''}
            </RowHead>
          ))}
        </RowHeads>
        <Sheet>
          <DataGrid>
            <Cell $kind="active">Metric</Cell>
            <Cell $kind="head">Team 1</Cell>
            <Cell $kind="head">Team 2</Cell>
            <Cell $kind="head">Team 3</Cell>
            {ROWS.map((row) =>
              row.map((value, i) => (
                <Cell key={`${row[0]}-${i}`} $kind={i === 0 ? 'text' : 'num'}>
                  {value}
                </Cell>
              )),
            )}
          </DataGrid>
          <Selection>
            <FillHandle />
          </Selection>
        </Sheet>
      </SheetBody>

      <Menu>
        {MENU.map((section) => (
          <MenuSection key={section.title}>
            <MenuTitle>{section.title}</MenuTitle>
            <Gallery>
              {section.icons.map((Icon, i) => (
                <GalleryItem key={i}>
                  <Icon />
                  {section.marked === i && <RedMark />}
                </GalleryItem>
              ))}
            </Gallery>
          </MenuSection>
        ))}
        <MoreRow>
          <MoreStockIcon />
          <span>
            <Mnemonic>M</Mnemonic>ore Stock Charts...
          </span>
        </MoreRow>
      </Menu>
    </Page>
  );
};

export default App;
